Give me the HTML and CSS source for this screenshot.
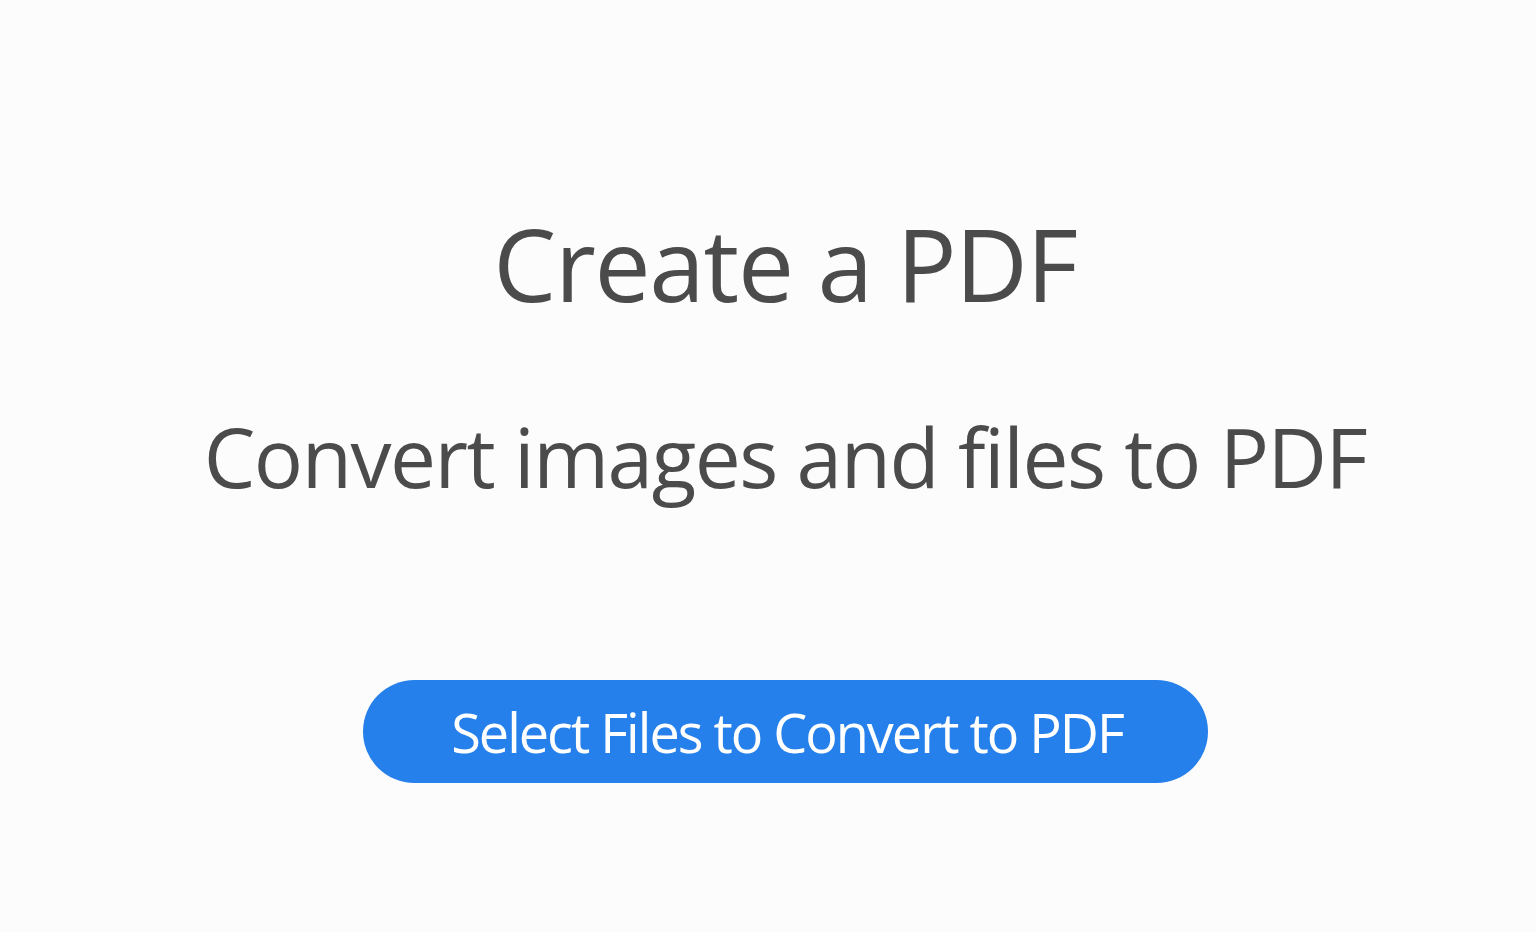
FILE: index.html
```html
<!DOCTYPE html>
<html lang="en">
<head>
    <meta charset="UTF-8">
    <meta name="viewport" content="width=device-width, initial-scale=1.0">
    <title>Create a PDF</title>
    <link rel="stylesheet" href="styles.css">
</head>
<body>
    <main class="create-pdf">
        <h1 class="title">Create a PDF</h1>
        <p class="subtitle">Convert images and files to PDF</p>
        <button type="button" class="select-btn">Select Files to Convert to PDF</button>
    </main>
</body>
</html>
```

FILE: styles.css
```css
html, body {
    margin: 0;
    padding: 0;
    height: 100%;
}
body {
    background-color: #fcfcfc;
    font-family: "Open Sans", "Noto Sans", Arial, sans-serif;
    color: #4b4b4b;
}
.create-pdf {
    display: flex;
    flex-direction: column;
    align-items: center;
    padding-top: 198px;
    padding-left: 34px;
}
.title {
    margin: 0;
    font-size: 100px;
    font-weight: 400;
    line-height: 130px;
    letter-spacing: -1.3px;
}
.subtitle {
    margin: 73px 0 0;
    font-size: 82px;
    line-height: 110px;
    letter-spacing: -1.5px;
}
.select-btn {
    margin-top: 169px;
    width: 845px;
    height: 103px;
    padding: 0 0 0 4px;
    border: none;
    border-radius: 52px;
    background-color: #2680eb;
    color: #fff;
    font-family: inherit;
    font-size: 54px;
    letter-spacing: -2px;
    cursor: pointer;
}
.select-btn:hover {
    background-color: #1473e6;
}
```
